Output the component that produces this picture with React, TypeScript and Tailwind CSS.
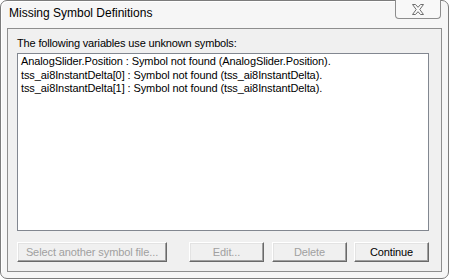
import React from "react";

const font = { fontFamily: '"Liberation Sans", Arial, sans-serif' };

function Btn({ label, disabled, w }: { label: string; disabled?: boolean; w: string }) {
  return (
    <div
      className={`${w} h-[20px] flex items-center justify-center bg-[#f0f0f0] border border-t-white border-l-white border-r-[#696969] border-b-[#696969] shadow-[inset_-1px_-1px_0_#a0a0a0,inset_1px_1px_0_#e3e3e3] text-[11px] tracking-[-0.1px] ${disabled ? "text-[#a0a0a0]" : "text-black"}`}
    >
      {label}
    </div>
  );
}

export default function App() {
  const lines = [
    "AnalogSlider.Position : Symbol not found (AnalogSlider.Position).",
    "tss_ai8InstantDelta[0] : Symbol not found (tss_ai8InstantDelta).",
    "tss_ai8InstantDelta[1] : Symbol not found (tss_ai8InstantDelta).",
  ];
  return (
    <div className="w-[450px] h-[280px] bg-white" style={font}>
      <div className="w-[449px] h-[279px] rounded-[7px] border border-[#7c7c7c] bg-[#f6f6f6] flex flex-col shadow-[inset_1px_1px_0_#ffffff]">
        <div className="h-[27px] flex items-start justify-between">
          <div className="pl-[8px] pt-[5px] text-[12px] text-black leading-[15px]">Missing Symbol Definitions</div>
          <div className="mr-[7px] w-[46px] h-[19px] -mt-px border border-t-0 border-[#8d8d8d] rounded-b-[4px] bg-[#f8f8f8] flex items-center justify-center">
            <svg width="14" height="11" viewBox="0 0 14 11">
              <path
                d="M1.5 0.5 H4.5 L7 3.3 L9.5 0.5 H12.5 L8.8 5.5 L12.5 10.5 H9.5 L7 7.7 L4.5 10.5 H1.5 L5.2 5.5 Z"
                fill="#fafafa"
                stroke="#6e6e6e"
                strokeWidth="1"
                strokeLinejoin="round"
              />
            </svg>
          </div>
        </div>
        <div className="mx-[6px] h-[244px] border border-[#8e8e8e] bg-[#f0f0f0] flex flex-col px-[9px]">
          <div className="pt-[8px] text-[11px] leading-[13px] tracking-[-0.15px] text-black">The following variables use unknown symbols:</div>
          <div className="mt-[3px] h-[178px] w-[412px] border border-[#828790] bg-white px-[3px] pt-[1px]">
            {lines.map((l) => (
              <div key={l} className="text-[11px] leading-[13.5px] tracking-[-0.1px] text-black whitespace-nowrap">
                {l}
              </div>
            ))}
          </div>
          <div className="mt-[11px] flex">
            <Btn label="Select another symbol file..." disabled w="w-[150px]" />
            <div className="ml-[22px]">
              <Btn label="Edit..." disabled w="w-[75px]" />
            </div>
            <div className="ml-[8px]">
              <Btn label="Delete" disabled w="w-[75px]" />
            </div>
            <div className="ml-[7px]">
              <Btn label="Continue" w="w-[75px]" />
            </div>
          </div>
        </div>
      </div>
    </div>
  );
}
